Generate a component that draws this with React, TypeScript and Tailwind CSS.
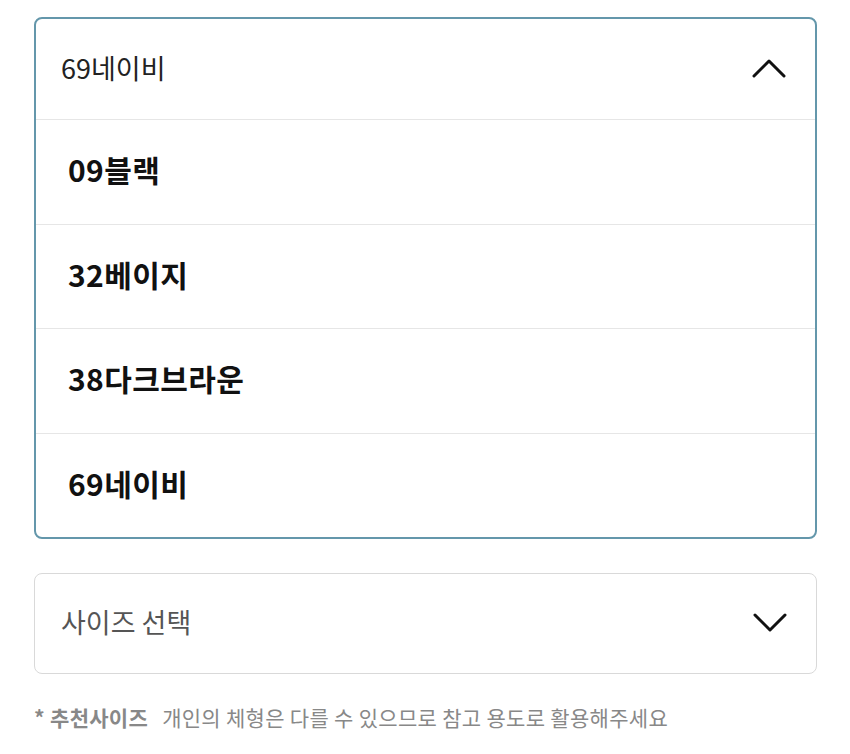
const colors = ['09블랙', '32베이지', '38다크브라운', '69네이비']

function Chevron({ up }: { up?: boolean }) {
  return (
    <svg width="34" height="22" viewBox="0 0 34 22" fill="none" className="text-[#111]">
      <polyline
        points={up ? '2,19 17,4 32,19' : '2,3 17,18 32,3'}
        stroke="currentColor"
        strokeWidth="3"
        strokeLinecap="round"
        strokeLinejoin="round"
      />
    </svg>
  )
}

export default function App() {
  return (
    <div className="min-h-[754px] w-[850px] bg-white pt-[17px] pl-[34px] font-['Noto_Sans_CJK_KR',sans-serif]">
      <div className="w-[783px] overflow-hidden rounded-lg border-2 border-[#6497ab]">
        <div className="flex h-[100px] items-center justify-between pb-[2px] pl-[25px] pr-[29px]">
          <span className="text-[27px] text-[#222]">69네이비</span>
          <Chevron up />
        </div>
        {colors.map((c) => (
          <div
            key={c}
            className="flex h-[104.5px] items-center border-t border-[#e6e6e6] pb-[4px] pl-[32px]"
          >
            <span className="text-[30px] font-bold tracking-[0.4px] text-[#111]">{c}</span>
          </div>
        ))}
      </div>

      <div className="mt-[34px] flex h-[101px] w-[783px] items-center justify-between rounded-lg border border-[#d9d9d9] pb-[2px] pl-[26px] pr-[29px]">
        <span className="text-[27px] text-[#555]">사이즈 선택</span>
        <Chevron />
      </div>

      <p className="mt-[28px] text-[21px] tracking-[0.3px] text-[#888]">
        <span className="font-bold">* 추천사이즈</span>
        <span className="ml-[14px]">개인의 체형은 다를 수 있으므로 참고 용도로 활용해주세요</span>
      </p>
    </div>
  )
}
